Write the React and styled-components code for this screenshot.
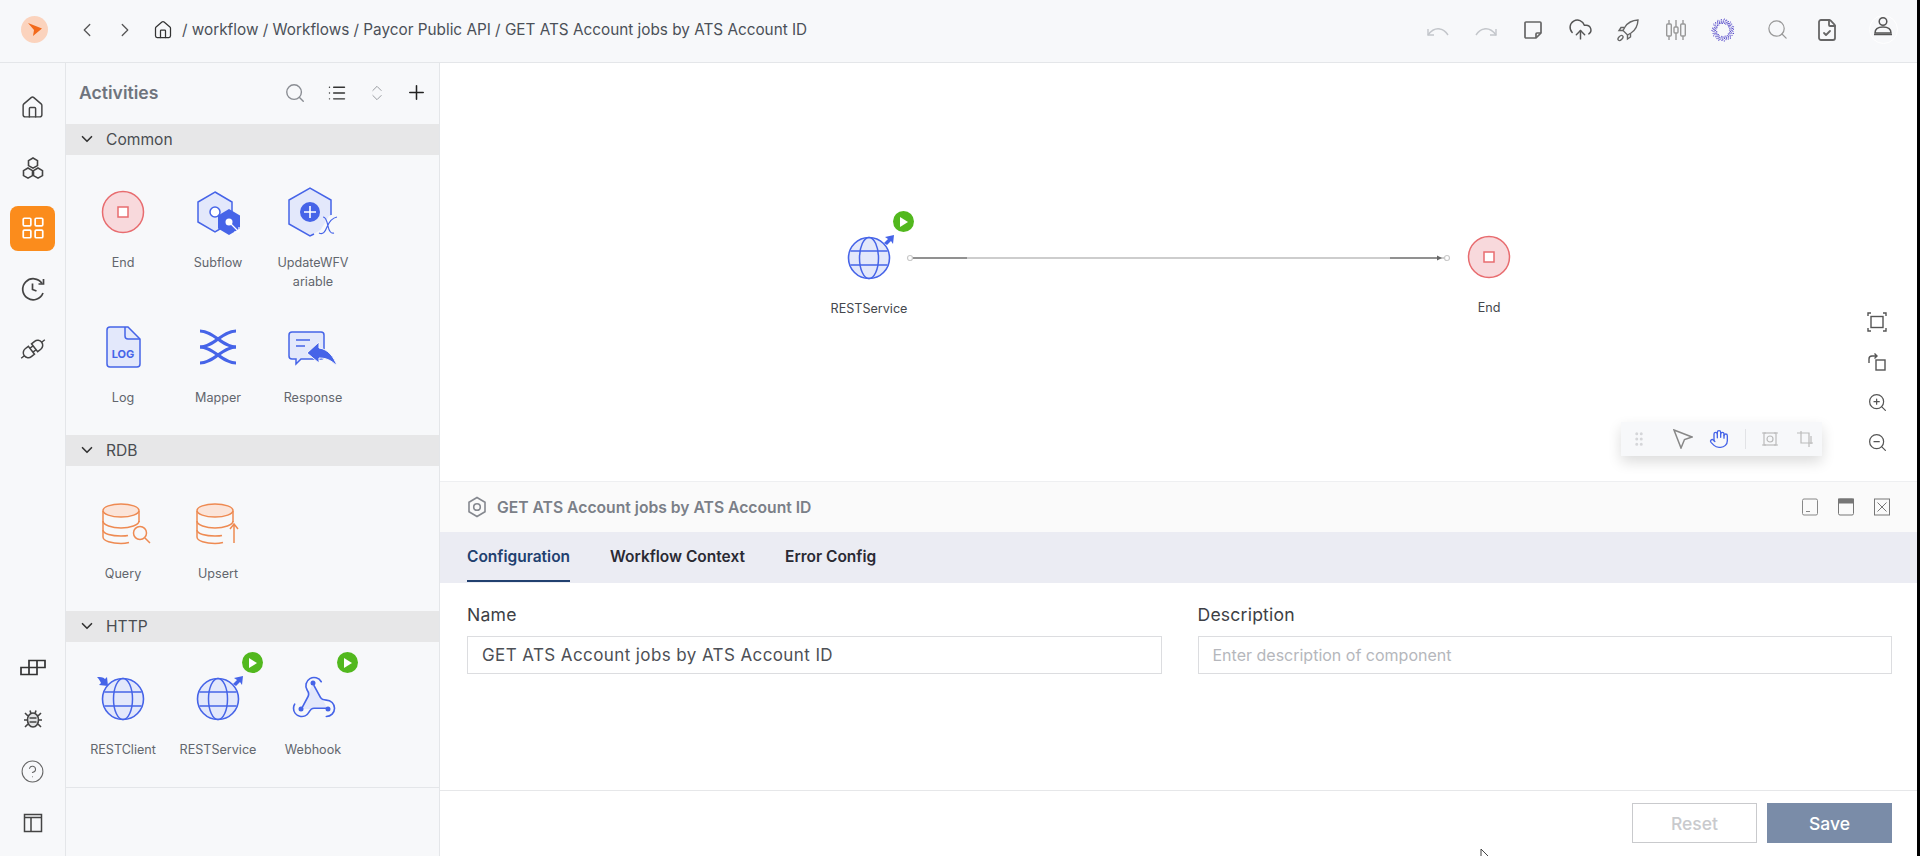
import React from 'react';
import styled, { createGlobalStyle } from 'styled-components';
import {
  ChevronLeft, ChevronRight, ChevronDown, ChevronsUpDown, Home, LayoutGrid, CircleHelp,
  Search, List, Plus, CloudUpload, FileCheck, ZoomIn, ZoomOut, Hand, GripVertical,
} from 'lucide-react';

const GlobalStyle = createGlobalStyle`
  html, body { margin: 0; padding: 0; background: #000; }
  body { font-family: Inter, "Open Sans", sans-serif; overflow: hidden; }
  * { box-sizing: border-box; }
`;

const Page = styled.div`
  width: 1917px;
  height: 856px;
  display: flex;
  flex-direction: column;
  background: #fff;
  overflow: hidden;
`;

const TopBar = styled.header`
  height: 63px;
  flex: none;
  display: flex;
  align-items: center;
  padding: 0 10px 3px 21px;
  background: #f7f8fa;
  border-bottom: 1px solid #e4e6e9;
`;

const Logo = styled.div`
  width: 27px;
  height: 27px;
  border-radius: 50%;
  background: #fbd3bd;
  display: flex;
  align-items: center;
  justify-content: center;
  margin-right: 20px;
`;

const Slot = styled.div`
  width: ${(p) => p.$w || 38}px;
  margin-left: ${(p) => p.$ml || 0}px;
  flex: none;
  display: flex;
  align-items: center;
  justify-content: center;
  color: ${(p) => p.$color || '#555'};
`;

const Crumbs = styled.div`
  font-size: 15.3px;
  color: #4b5058;
  white-space: pre;
`;

const TopActions = styled.div`
  margin-left: auto;
  display: flex;
  align-items: center;
`;

const UserRing = styled.div`
  width: 29px;
  height: 29px;
  border-radius: 50%;
  border: 1px solid #fff;
  display: flex;
  align-items: flex-start;
  justify-content: center;
`;

const Body = styled.div`
  flex: 1;
  min-height: 0;
  display: flex;
`;

const Rail = styled.nav`
  width: 66px;
  flex: none;
  display: flex;
  flex-direction: column;
  justify-content: space-between;
  padding: 14px 0 7px;
  background: #f7f8fa;
  border-right: 1px solid #e4e6e9;
`;

const RailGroup = styled.div`
  display: flex;
  flex-direction: column;
`;

const RailSlot = styled.div`
  height: ${(p) => p.$h}px;
  display: flex;
  align-items: center;
  justify-content: center;
  color: #444;
`;

const RailActive = styled.div`
  width: 45px;
  height: 45px;
  border-radius: 8px;
  background: #fb8c1c;
  color: #fff;
  display: flex;
  align-items: center;
  justify-content: center;
`;

const Activities = styled.aside`
  width: 374px;
  flex: none;
  background: #f7f8fa;
  border-right: 1px solid #e4e6e9;
`;

const ActivitiesHead = styled.div`
  height: 61px;
  display: flex;
  align-items: center;
  padding: 0 0 2px 13px;
`;

const ActivitiesTitle = styled.div`
  font-size: 17.6px;
  font-weight: 600;
  color: #6f747d;
  margin-right: auto;
`;

const SectionBand = styled.div`
  height: 31px;
  display: flex;
  align-items: center;
  padding: 0 0 1px 12px;
  background: #e7e7e8;
  color: #4a4d52;
  font-size: 15.6px;
  gap: 10px;
`;

const SectionGrid = styled.div`
  display: grid;
  grid-template-columns: repeat(3, 95px);
  padding: 1px 0 28px 9.5px;
`;

const Item = styled.div`
  display: flex;
  flex-direction: column;
  align-items: center;
  padding-top: 35px;
`;

const IconBox = styled.div`
  position: relative;
  width: 42px;
  height: 42px;
  margin-bottom: 20px;
  flex: none;
`;

const Art = styled.svg`
  position: absolute;
  left: -9px;
  top: -9px;
  overflow: visible;
`;

const RunBadge = styled.div`
  position: absolute;
  left: 45px;
  top: -26px;
  width: 21px;
  height: 21px;
  border-radius: 50%;
  background: #52b81e;
  display: flex;
  align-items: center;
  justify-content: center;
`;

const ItemLabel = styled.div`
  text-align: center;
  font-size: 12.6px;
  line-height: 19px;
  color: #62666d;
  white-space: pre-line;
`;

const PanelRule = styled.div`
  border-top: 1px solid #e4e6e9;
`;

const Main = styled.main`
  flex: 1;
  min-width: 0;
  display: flex;
  flex-direction: column;
`;

const Canvas = styled.section`
  position: relative;
  height: 418px;
  flex: none;
  background: #fff;
`;

const Node = styled.div`
  position: absolute;
  left: ${(p) => p.$x}px;
  top: ${(p) => p.$y}px;
  width: 90px;
  display: flex;
  flex-direction: column;
  align-items: center;
`;

const NodeLabel = styled.div`
  margin-top: 1px;
  font-size: 12.6px;
  line-height: 18px;
  color: #44474d;
  white-space: nowrap;
`;

const Wire = styled.svg`
  position: absolute;
  left: 465px;
  top: 188px;
`;

const ViewTools = styled.div`
  position: absolute;
  top: 239px;
  right: 25px;
  width: 30px;
  display: flex;
  flex-direction: column;
`;

const ViewTool = styled.div`
  height: 40px;
  display: flex;
  align-items: center;
  justify-content: center;
  color: #555;
`;

const FloatBar = styled.div`
  position: absolute;
  right: 95px;
  bottom: 25px;
  width: 201px;
  height: 34px;
  display: flex;
  align-items: center;
  background: #f7f8fa;
  box-shadow: 0 6px 14px rgba(0, 0, 0, 0.14);
`;

const FloatSep = styled.div`
  width: 1px;
  height: 20px;
  margin-left: 8px;
  background: #e2e3e6;
`;

const Details = styled.section`
  flex: 1;
  min-height: 0;
  display: flex;
  flex-direction: column;
`;

const DetailsHead = styled.div`
  height: 51px;
  flex: none;
  display: flex;
  align-items: center;
  padding: 0 17px 0 27px;
  background: #fafafa;
  border-top: 1px solid #eeeff1;
`;

const DetailsTitle = styled.div`
  margin-left: 10px;
  font-size: 15.7px;
  font-weight: 600;
  color: #7b7f88;
  margin-right: auto;
`;

const TabRow = styled.div`
  height: 51px;
  flex: none;
  display: flex;
  gap: 40px;
  padding-left: 27px;
  background: #ebecf3;
`;

const Tab = styled.div`
  height: 50px;
  display: flex;
  align-items: center;
  font-size: 15.5px;
  font-weight: 600;
  color: ${(p) => (p.$active ? '#21406f' : '#2a2a33')};
  border-bottom: 2px solid ${(p) => (p.$active ? '#21406f' : 'transparent')};
`;

const Form = styled.div`
  flex: 1;
  display: grid;
  grid-template-columns: 1fr 1fr;
  align-content: start;
  gap: 36px;
  padding: 20px 25px 0 27px;
`;

const Field = styled.div`
  display: flex;
  flex-direction: column;
`;

const FieldLabel = styled.label`
  font-size: 17.6px;
  line-height: 24px;
  letter-spacing: 0.2px;
  color: #3d3f45;
  margin-bottom: 9px;
`;

const TextBox = styled.div`
  height: 38px;
  display: flex;
  align-items: center;
  padding: 0 14px;
  border: 1px solid #dcdde0;
  font-size: ${(p) => (p.$empty ? 16 : 17)}px;
  letter-spacing: ${(p) => (p.$empty ? 0 : 0.4)}px;
  color: ${(p) => (p.$empty ? '#b5b7bc' : '#4d5056')};
`;

const Footer = styled.footer`
  position: relative;
  height: 66px;
  flex: none;
  display: flex;
  justify-content: flex-end;
  gap: 10px;
  padding: 12px 25px 0 0;
  border-top: 1px solid #e6e7e9;
`;

const Button = styled.button`
  width: 125px;
  height: 40px;
  font: 500 17.5px Inter, sans-serif;
  color: ${(p) => (p.$primary ? '#fff' : '#c9cacd')};
  background: ${(p) => (p.$primary ? '#7a8ca8' : '#fff')};
  border: 1px solid ${(p) => (p.$primary ? '#7a8ca8' : '#c9cacd')};
`;

const Pointer = styled.svg`
  position: absolute;
  left: 1040px;
  top: 57px;
`;

const BLUE = '#4664e8';
const BLUE_SOFT = '#e3e8fb';
const ORANGE = '#ee8a52';

const Undo = ({ flip }) => (
  <svg width="24" height="24" viewBox="0 0 24 24" fill="none" stroke="#c3c6cb" strokeWidth="1.4" style={flip ? { transform: 'scaleX(-1)' } : undefined}>
    <path d="M2 11v6h6" />
    <path d="M2 17c3-4 7-7 12-6 3 .5 6 3 8 6" />
  </svg>
);

const Note = () => (
  <svg width="20" height="20" viewBox="0 0 20 20" fill="none" stroke="#666" strokeWidth="1.7">
    <path d="M3 2h14a1 1 0 0 1 1 1v10l-5 5H3a1 1 0 0 1-1-1V3a1 1 0 0 1 1-1z" />
    <path d="M18 13h-4a1 1 0 0 0-1 1v4" />
  </svg>
);

const RocketArt = () => (
  <svg width="24" height="24" viewBox="0 0 24 24" fill="none" stroke="#666" strokeWidth="1.4">
    <path d="M22 2c-6 .3-10.500 3-13 7l-2 3.500 4.500 4.500 3.500-2c4-2.500 6.700-7 7-13z" />
    <path d="M8.500 9.500H5l-2 3h4M14.500 15.500V19l-3 2v-4" />
    <ellipse cx="4.500" cy="20" rx="3" ry="1.800" transform="rotate(-45 4.500 20)" />
  </svg>
);

const SlidersArt = () => (
  <svg width="22" height="24" viewBox="0 0 22 24" fill="none" stroke="#999" strokeWidth="1.4">
    <path d="M4 2v4M4 18v4M11 2v7M11 15v7M18 2v4M18 18v4" />
    <rect x="1.700" y="6" width="4.600" height="12" rx="1" />
    <rect x="9" y="9" width="4" height="6" rx="1" />
    <rect x="15.700" y="6" width="4.600" height="12" rx="1" />
  </svg>
);

const SpinnerDots = () => {
  const dots = [];
  for (let i = 0; i < 110; i += 1) {
    const angle = i * 2.39996;
    const r = 6.5 + ((i * 7) % 10) * 0.5;
    dots.push(<circle key={i} cx={12 + r * Math.cos(angle)} cy={12 + r * Math.sin(angle)} r="0.6" />);
  }
  return (
    <svg width="24" height="24" viewBox="0 0 24 24" fill="#5145c8">{dots}</svg>
  );
};

const UserArt = () => (
  <svg width="22" height="22" viewBox="0 0 22 22" fill="none" stroke="#555" strokeWidth="1.5">
    <circle cx="11" cy="5.500" r="3.800" />
    <path d="M3 17c0-4 3.500-6 8-6s8 2 8 6z" />
    <path d="M2 18.500h18" />
  </svg>
);

const LogoArrow = () => (
  <svg width="14" height="13" viewBox="0 0 14 13" fill="#f2691b">
    <path d="M0 0l14 5.500-9 7.500 1-6z" />
  </svg>
);

const HexTrio = () => (
  <svg width="24" height="24" viewBox="0 0 24 24" fill="none" stroke="#444" strokeWidth="1.6">
    <path d="M12 2l4.500 2.600v5L12 12.200 7.500 9.600v-5z" />
    <path d="M7 12l4.500 2.600v5L7 22.200 2.500 19.600v-5z" />
    <path d="M17 12l4.500 2.600v5L17 22.200l-4.500-2.600v-5z" />
  </svg>
);

const ClockBack = () => (
  <svg width="26" height="26" viewBox="0 0 26 26" fill="none" stroke="#444" strokeWidth="1.700">
    <path d="M23 17a10.500 10.500 0 1 1-1-9.500" />
    <path d="M23.500 3v5h-5" />
    <path d="M12.500 7.500v6l4 1.500" />
  </svg>
);

const PlugArt = () => (
  <svg width="26" height="26" viewBox="-13 -13 26 26" fill="none" stroke="#444" strokeWidth="1.500">
    <g transform="rotate(-38)">
      <path d="M-2-5H-6a5 5 0 0 0 0 10h4z" />
      <path d="M2-5H6a5 5 0 0 1 0 10H2z" />
      <path d="M-2-2.500H2M-2 2.500H2M-11 0H-15M11 0H15" />
    </g>
  </svg>
);

const Blocks = () => (
  <svg width="26" height="17" viewBox="0 0 26 17" fill="none" stroke="#333" strokeWidth="1.700">
    <path d="M1 8.500h16v7H1zM9 8.500v7M9 8.500v-7h16v7h-8M17 1.500v7" />
  </svg>
);

const BugArt = () => (
  <svg width="20" height="20" viewBox="0 0 20 20" fill="none" stroke="#444" strokeWidth="1.600">
    <ellipse cx="10" cy="11" rx="5.500" ry="7" fill="#e3e4e6" />
    <path d="M6.500 9h7M6.500 13h7M1 11h3.500M15.500 11H19M2 4l3 3M18 4l-3 3M2 18l3-3M18 18l-3-3M7 1.500L8 4.500M13 1.500L12 4.500" />
  </svg>
);

const PaneArt = () => (
  <svg width="20" height="20" viewBox="0 0 20 20" fill="none" stroke="#444" strokeWidth="1.500">
    <rect x="1.500" y="1.500" width="17" height="17" />
    <path d="M1.500 4.500h17M8 4.500v14" />
  </svg>
);

const Frame = () => (
  <svg width="20" height="20" viewBox="0 0 20 20" fill="none" stroke="#555" strokeWidth="1.400">
    <rect x="4" y="4.500" width="12" height="11" />
    <path d="M1 4V1h3M16 1h3v3M19 16v3h-3M4 19H1v-3" />
  </svg>
);

const RotateFrame = () => (
  <svg width="20" height="20" viewBox="0 0 20 20" fill="none" stroke="#555" strokeWidth="1.400">
    <rect x="9" y="8" width="9" height="10" />
    <path d="M2 11V7c0-2 1-3 3-3h5M7.500 1.500L10 4 7.500 6.500" />
  </svg>
);

const ArrowTool = () => (
  <svg width="20" height="20" viewBox="0 0 20 20" fill="none" stroke="#888" strokeWidth="1.500">
    <path d="M1 1l18 7-7.500 2.500L8 19z" />
  </svg>
);

const SelectFrame = () => (
  <svg width="16" height="16" viewBox="0 0 16 16" fill="none" stroke="#bbb" strokeWidth="1.200">
    <rect x="2" y="2" width="12" height="12" />
    <path d="M0 2h4M12 2h4M0 14h4M12 14h4" />
    <circle cx="8" cy="8" r="3" />
  </svg>
);

const CropFrame = () => (
  <svg width="16" height="16" viewBox="0 0 16 16" fill="none" stroke="#bbb" strokeWidth="1.200">
    <path d="M0 2h12v14M4 0v12h12M14 5v8" />
  </svg>
);

const WinMin = () => (
  <svg width="16" height="18" viewBox="0 0 16 18" fill="none" stroke="#888" strokeWidth="1">
    <rect x="0.500" y="1" width="15" height="16" rx="1.500" />
    <path d="M4 13.500h4" />
  </svg>
);

const WinMax = () => (
  <svg width="16" height="18" viewBox="0 0 16 18" fill="none" stroke="#777" strokeWidth="1">
    <rect x="0.500" y="1" width="15" height="16" rx="1.500" />
    <rect x="0.500" y="1" width="15" height="4" fill="#777" />
  </svg>
);

const WinClose = () => (
  <svg width="16" height="18" viewBox="0 0 16 18" fill="none" stroke="#777" strokeWidth="1">
    <rect x="0.500" y="1" width="15" height="16" />
    <path d="M3.500 4.500l9 9M12.500 4.500l-9 9" />
  </svg>
);

const HexOutline = () => (
  <svg width="20" height="22" viewBox="0 0 20 22" fill="none" stroke="#85888f" strokeWidth="1.600">
    <path d="M10 1.500l8 4.700v9.600l-8 4.700-8-4.700V6.200z" />
    <circle cx="10" cy="11" r="3.300" />
  </svg>
);

const Play = () => (
  <svg width="9" height="10" viewBox="0 0 9 10" fill="#fff">
    <path d="M1 0l8 5-8 5z" />
  </svg>
);

// activity artwork, all drawn around 0,0 which is the middle of the icon box
const ArtBox = ({ children }) => (
  <Art width="60" height="60" viewBox="-30 -30 60 60" fill="none">{children}</Art>
);

const EndArt = () => (
  <ArtBox>
    <circle r="20.500" fill="#f8d9dc" stroke="#e86c6f" strokeWidth="1.500" />
    <rect x="-5" y="-5" width="10" height="10" fill="#fff" stroke="#e86c6f" strokeWidth="1.500" />
  </ArtBox>
);

const SubflowArt = () => (
  <ArtBox>
    <path d="M-3-20l17 10v20l-17 10-17-10v-20z" fill={BLUE_SOFT} stroke={BLUE} strokeWidth="1.500" />
    <circle cx="-3" cy="0" r="5" fill="#fff" stroke={BLUE} strokeWidth="1.500" />
    <path d="M11-3l11 6.500v13L11 23 0 16.500v-13z" fill={BLUE} />
    <circle cx="11" cy="10" r="3.500" fill="#fff" />
    <path d="M13 12l8 8M21 15v5h-5" stroke="#fff" strokeWidth="1.200" />
  </ArtBox>
);

const UpdateArt = () => (
  <ArtBox>
    <path d="M-3-24L18-12V12L-3 24-24 12V-12z" fill={BLUE_SOFT} />
    <path d="M18 3V-12L-3-24-24-12V12L-3 24l4-2" stroke={BLUE} strokeWidth="1.500" />
    <path d="M4 24h26V4H16z" fill="#f7f8fa" />
    <circle cx="-3" cy="0" r="10" fill={BLUE} />
    <path d="M-9 0H3M-3-6V6" stroke="#fff" strokeWidth="1.600" />
    <path d="M6 21c4 2 6-1 8-6s5-9 10-10M10 5c3 0 4 4 5 9s3 8 6 7" stroke={BLUE} strokeWidth="1.200" />
  </ArtBox>
);

const LogArt = () => (
  <ArtBox>
    <path d="M-13-20H5L17-8V17a3 3 0 0 1-3 3H-13a3 3 0 0 1-3-3V-17a3 3 0 0 1 3-3z" fill={BLUE_SOFT} stroke={BLUE} strokeWidth="1.500" />
    <path d="M2-20V-11a3 3 0 0 0 3 3H17" stroke={BLUE} strokeWidth="1.500" />
    <text x="0" y="11" textAnchor="middle" fontSize="11" fontWeight="700" fontFamily="Inter, sans-serif" fill={BLUE}>LOG</text>
  </ArtBox>
);

const MapperArt = () => (
  <ArtBox>
    <g stroke={BLUE} strokeWidth="3">
      <path d="M-18-16C-4-16 4 0 18 0" />
      <path d="M18-16C4-16-4 0-18 0" />
      <path d="M-18 16C-4 16 4 0 18 0" />
      <path d="M18 16C4 16-4 0-18 0" />
    </g>
  </ArtBox>
);

const ResponseArt = () => (
  <ArtBox>
    <path d="M-21-15H8a3 3 0 0 1 3 3V9a3 3 0 0 1-3 3H-12l-5 5V12h-4a3 3 0 0 1-3-3V-12a3 3 0 0 1 3-3z" fill={BLUE_SOFT} stroke={BLUE} strokeWidth="1.500" />
    <path d="M-17-7H-3M-17-1H-8" stroke={BLUE} strokeWidth="1.500" />
    <path d="M-6 6L6-5V1C15 2 21 10 24 19 18 13 13 11 6 11V16z" fill={BLUE} stroke="#f7f8fa" strokeWidth="1" />
  </ArtBox>
);

const Database = ({ x }) => (
  <g stroke={ORANGE} strokeWidth="1.500" transform={`translate(${x} 0)`}>
    <path d="M-18-12V14C-18 18-9 20.500 0 20.500 3 20.500 6 20 8 19.500" />
    <path d="M18-12V-1" />
    <ellipse cx="0" cy="-12.500" rx="18" ry="6.500" fill="#fbe4d9" />
    <path d="M-18-2C-18 2-9 5 0 5s18-3 18-7" />
    <path d="M-18 7c0 4 9 6 18 6 3 0 5 0 7-.5" />
  </g>
);

const QueryArt = () => (
  <ArtBox>
    <Database x={-2} />
    <circle cx="17" cy="10" r="6.500" fill="#f7f8fa" stroke={ORANGE} strokeWidth="1.500" />
    <path d="M22 15l5 5" stroke={ORANGE} strokeWidth="1.500" />
  </ArtBox>
);

const UpsertArt = () => (
  <ArtBox>
    <Database x={-3} />
    <path d="M16 20V1M12 6l4-5 4 5" stroke={ORANGE} strokeWidth="1.500" />
  </ArtBox>
);

const GlobeArt = ({ incoming }) => (
  <ArtBox>
    <circle r="20.500" fill={BLUE_SOFT} stroke={BLUE} strokeWidth="1.600" />
    <ellipse rx="9.500" ry="20.500" stroke={BLUE} strokeWidth="1.500" />
    <path d="M-18.500-7h37M-18.500 7h37" stroke={BLUE} strokeWidth="1.500" />
    {incoming
      ? <path d="M-26-22c3 0 6 0 8 2l2-2 1 9-9-1 2-2c-1-2-2-4-4-6z" fill={BLUE} />
      : <path d="M15-15l4-4-3-2 9-2-1 9-2-3-4 4z" fill={BLUE} />}
  </ArtBox>
);

const WebhookArt = () => (
  <ArtBox>
    <path d="M0-16L-12 10H15z" fill={BLUE_SOFT} />
    <g transform="translate(0 -2) scale(2.050) translate(-11.500 -11.500)" stroke={BLUE} strokeWidth="0.800" strokeLinecap="round">
      <path d="M18 16.980h-5.990c-1.100 0-1.950.940-2.480 1.900A4 4 0 0 1 2 17c.010-.700.200-1.400.570-2" />
      <path d="m6 17 3.130-5.780c.530-.970.100-2.180-.500-3.100a4 4 0 1 1 6.890-4.060" />
      <path d="m12 6 3.130 5.730C15.660 12.700 16.900 13 18 13a4 4 0 0 1 0 8" />
    </g>
    <circle cx="0" cy="-16" r="2.500" fill={BLUE} />
    <circle cx="-12" cy="10" r="2.500" fill={BLUE} />
    <circle cx="15" cy="10" r="2.500" fill={BLUE} />
  </ArtBox>
);

const sections = [
  {
    name: 'Common',
    items: [
      { label: 'End', art: <EndArt /> },
      { label: 'Subflow', art: <SubflowArt /> },
      { label: 'UpdateWFV\nariable', art: <UpdateArt /> },
      { label: 'Log', art: <LogArt /> },
      { label: 'Mapper', art: <MapperArt /> },
      { label: 'Response', art: <ResponseArt /> },
    ],
  },
  {
    name: 'RDB',
    items: [
      { label: 'Query', art: <QueryArt /> },
      { label: 'Upsert', art: <UpsertArt /> },
    ],
  },
  {
    name: 'HTTP',
    items: [
      { label: 'RESTClient', art: <GlobeArt incoming /> },
      { label: 'RESTService', art: <GlobeArt />, run: true },
      { label: 'Webhook', art: <WebhookArt />, run: true },
    ],
  },
];

const App = () => {
  return (
    <Page>
      <GlobalStyle />
      <TopBar>
        <Logo><LogoArrow /></Logo>
        <Slot><ChevronLeft size={22} strokeWidth={1.4} /></Slot>
        <Slot><ChevronRight size={22} strokeWidth={1.4} /></Slot>
        <Slot $color="#333"><Home size={20} strokeWidth={1.5} /></Slot>
        <Crumbs>/ workflow / Workflows / Paycor Public API / GET ATS Account jobs by ATS Account ID</Crumbs>
        <TopActions>
          <Slot $w={47.5}><Undo /></Slot>
          <Slot $w={47.5}><Undo flip /></Slot>
          <Slot $w={47.5}><Note /></Slot>
          <Slot $w={47.5}><CloudUpload size={25} strokeWidth={1.4} /></Slot>
          <Slot $w={47.5}><RocketArt /></Slot>
          <Slot $w={47.5}><SlidersArt /></Slot>
          <Slot $w={47.5}><SpinnerDots /></Slot>
          <Slot $w={48} $ml={6} $color="#999"><Search size={23} strokeWidth={1.3} /></Slot>
          <Slot $w={48} $ml={2} $color="#666"><FileCheck size={24} strokeWidth={1.8} /></Slot>
          <Slot $w={48} $ml={8}><UserRing><UserArt /></UserRing></Slot>
        </TopActions>
      </TopBar>
      <Body>
        <Rail>
          <RailGroup>
            <RailSlot $h={60.5}><Home size={25} strokeWidth={1.4} /></RailSlot>
            <RailSlot $h={60.5}><HexTrio /></RailSlot>
            <RailSlot $h={60.5}><RailActive><LayoutGrid size={26} strokeWidth={1.6} /></RailActive></RailSlot>
            <RailSlot $h={60.5}><ClockBack /></RailSlot>
            <RailSlot $h={60.5}><PlugArt /></RailSlot>
          </RailGroup>
          <RailGroup>
            <RailSlot $h={52}><Blocks /></RailSlot>
            <RailSlot $h={52}><BugArt /></RailSlot>
            <RailSlot $h={52}><CircleHelp size={25} strokeWidth={1} color="#666" /></RailSlot>
            <RailSlot $h={52}><PaneArt /></RailSlot>
          </RailGroup>
        </Rail>
        <Activities>
          <ActivitiesHead>
            <ActivitiesTitle>Activities</ActivitiesTitle>
            <Slot $w={44} $color="#8a8d93"><Search size={22} strokeWidth={1.5} /></Slot>
            <Slot $w={40} $color="#333"><List size={20} strokeWidth={1.7} /></Slot>
            <Slot $w={40} $color="#9a9da2"><ChevronsUpDown size={20} strokeWidth={1.2} /></Slot>
            <Slot $w={38} $color="#222"><Plus size={23} strokeWidth={1.6} /></Slot>
            <Slot $w={4} />
          </ActivitiesHead>
          {sections.map((section) => (
            <div key={section.name}>
              <SectionBand>
                <ChevronDown size={18} strokeWidth={2.2} color="#333" />
                {section.name}
              </SectionBand>
              <SectionGrid>
                {section.items.map((item) => (
                  <Item key={item.label}>
                    <IconBox>
                      {item.art}
                      {item.run && <RunBadge><Play /></RunBadge>}
                    </IconBox>
                    <ItemLabel>{item.label}</ItemLabel>
                  </Item>
                ))}
              </SectionGrid>
            </div>
          ))}
          <PanelRule />
        </Activities>
        <Main>
          <Canvas>
            <Node $x={384} $y={174}>
              <IconBox>
                <GlobeArt />
                <RunBadge><Play /></RunBadge>
              </IconBox>
              <NodeLabel>RESTService</NodeLabel>
            </Node>
            <Wire width="545" height="14" viewBox="0 0 545 14" fill="none">
              <path d="M8 7H540" stroke="#bdbdbd" strokeWidth="1.500" />
              <path d="M8 7H62M485 7H535" stroke="#7d7d7d" strokeWidth="1.500" />
              <path d="M532 4.500l5 2.500-5 2.500z" fill="#666" />
              <circle cx="5" cy="7" r="2.500" fill="#fff" stroke="#c9c9c9" strokeWidth="1.200" />
              <circle cx="542" cy="7" r="2.500" fill="#fff" stroke="#c9c9c9" strokeWidth="1.200" />
            </Wire>
            <Node $x={1004} $y={173}>
              <IconBox><EndArt /></IconBox>
              <NodeLabel>End</NodeLabel>
            </Node>
            <ViewTools>
              <ViewTool><Frame /></ViewTool>
              <ViewTool><RotateFrame /></ViewTool>
              <ViewTool><ZoomIn size={21} strokeWidth={1.4} /></ViewTool>
              <ViewTool><ZoomOut size={21} strokeWidth={1.4} /></ViewTool>
            </ViewTools>
            <FloatBar>
              <Slot $w={36} $color="#d5d6d9"><GripVertical size={18} /></Slot>
              <Slot $w={36} $ml={8}><ArrowTool /></Slot>
              <Slot $w={36} $color={BLUE}><Hand size={20} strokeWidth={1.6} /></Slot>
              <FloatSep />
              <Slot $w={34} $ml={7}><SelectFrame /></Slot>
              <Slot $w={34} $ml={1}><CropFrame /></Slot>
            </FloatBar>
          </Canvas>
          <Details>
            <DetailsHead>
              <HexOutline />
              <DetailsTitle>GET ATS Account jobs by ATS Account ID</DetailsTitle>
              <Slot $w={36}><WinMin /></Slot>
              <Slot $w={36}><WinMax /></Slot>
              <Slot $w={36}><WinClose /></Slot>
            </DetailsHead>
            <TabRow>
              <Tab $active>Configuration</Tab>
              <Tab>Workflow Context</Tab>
              <Tab>Error Config</Tab>
            </TabRow>
            <Form>
              <Field>
                <FieldLabel>Name</FieldLabel>
                <TextBox>GET ATS Account jobs by ATS Account ID</TextBox>
              </Field>
              <Field>
                <FieldLabel>Description</FieldLabel>
                <TextBox $empty>Enter description of component</TextBox>
              </Field>
            </Form>
            <Footer>
              <Button>Reset</Button>
              <Button $primary>Save</Button>
              <Pointer width="12" height="10" viewBox="0 0 12 10" fill="#fff" stroke="#444" strokeWidth="1">
                <path d="M1 1v14l4-4 6 0z" />
              </Pointer>
            </Footer>
          </Details>
        </Main>
      </Body>
    </Page>
  );
};

export default App;
